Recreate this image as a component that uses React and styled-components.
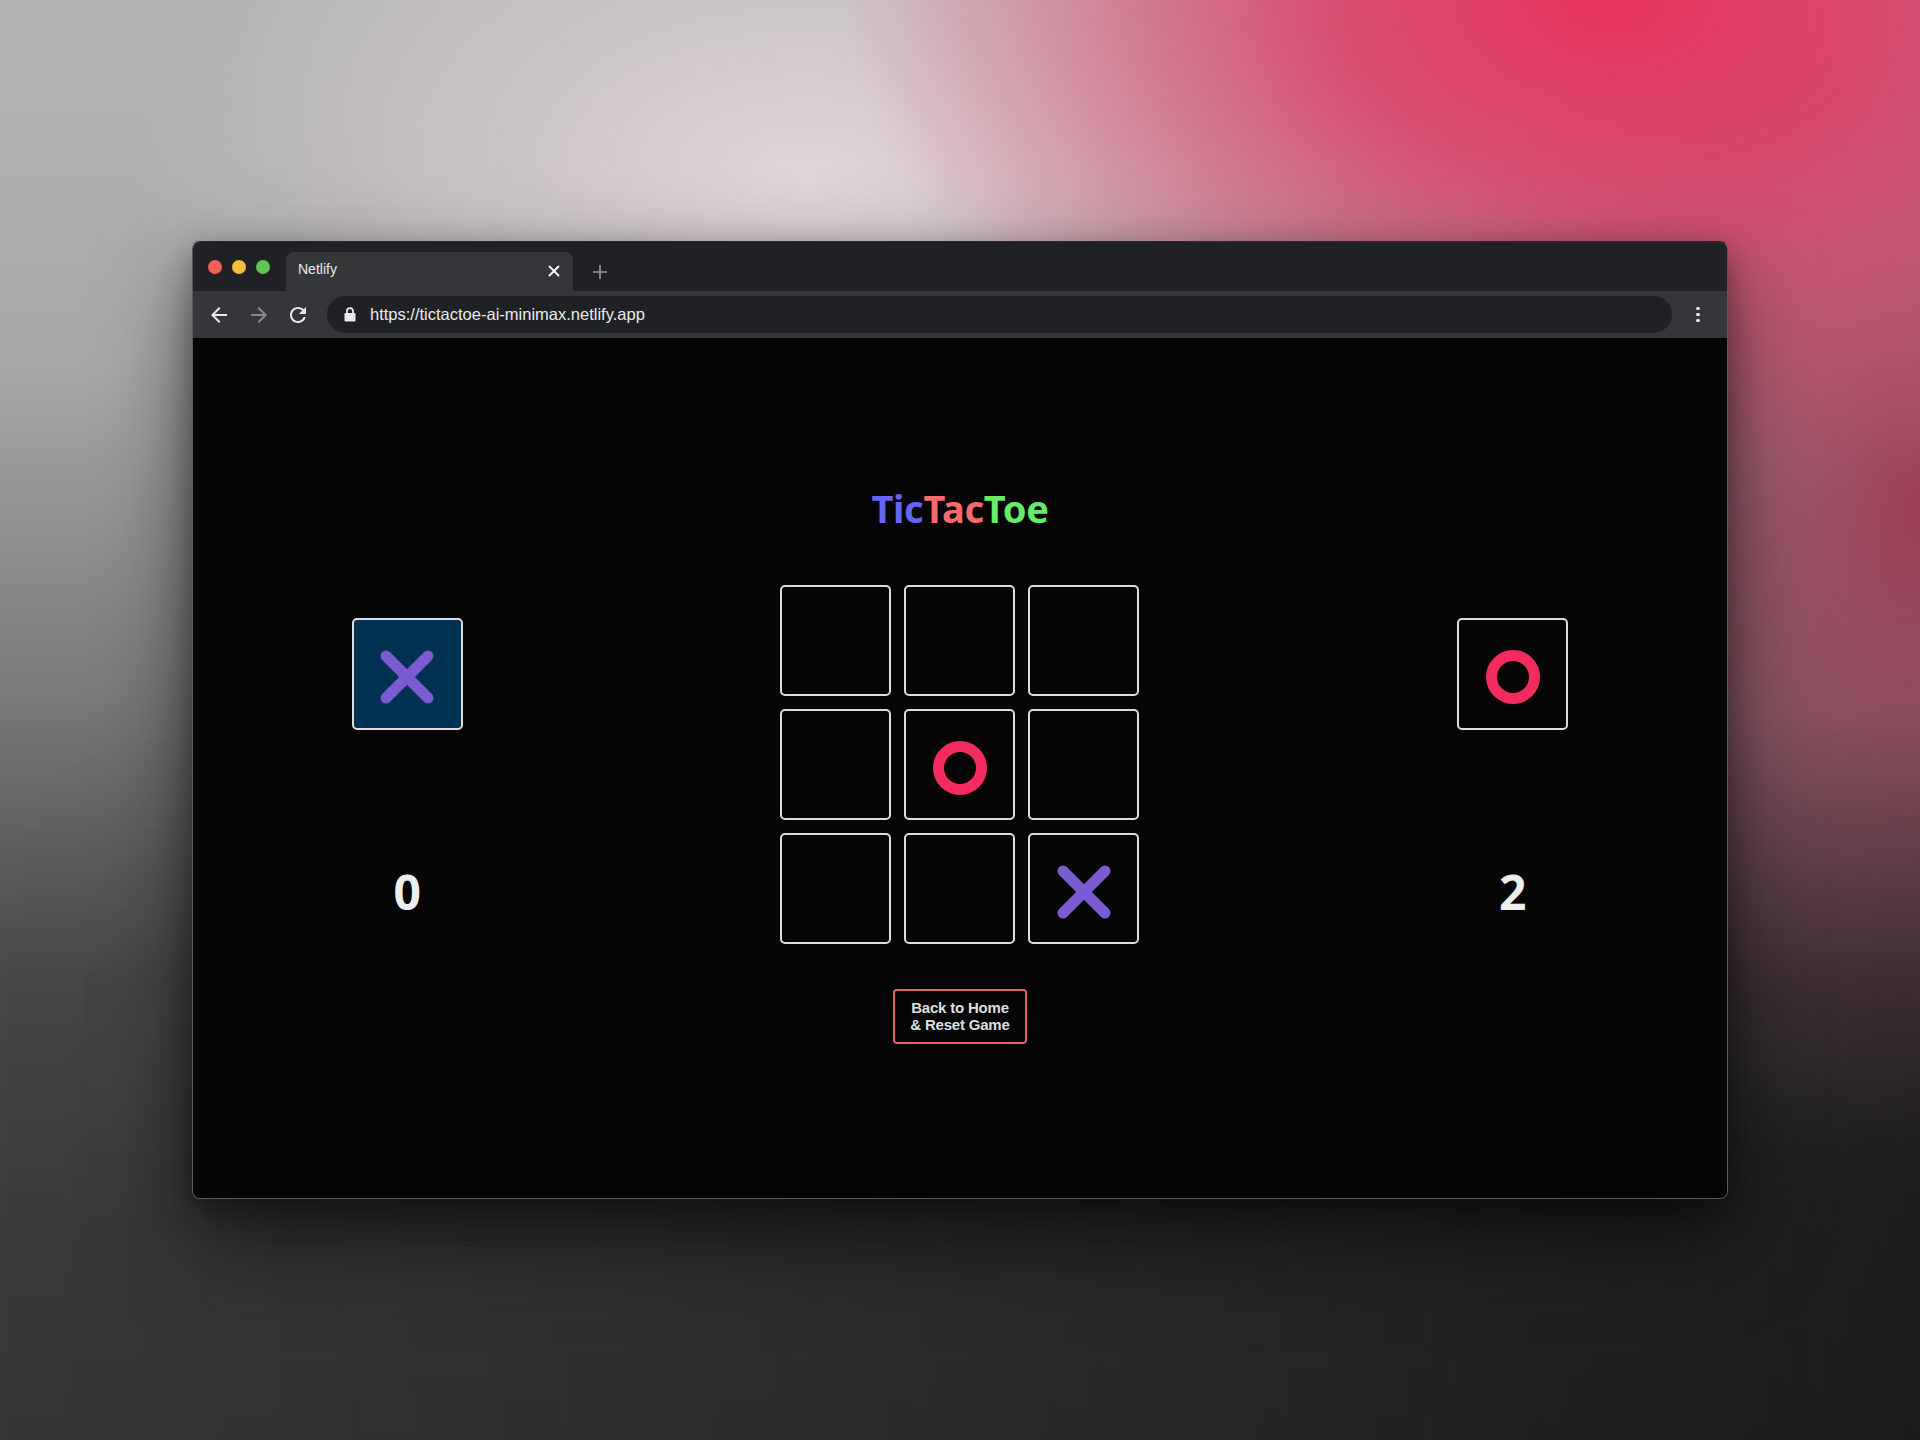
import React from "react";
import styled, { createGlobalStyle } from "styled-components";

const Global = createGlobalStyle`
  html, body { margin: 0; padding: 0; }
  body { font-family: "Liberation Sans", Arial, sans-serif; }
  * { box-sizing: border-box; }
`;

const Page = styled.div`
  position: relative;
  width: 1920px;
  height: 1440px;
  padding: 241px 192px 0 192px;
  background:
    radial-gradient(ellipse 40% 34% at 84% 0%, rgba(232, 52, 94, 1) 0%, rgba(222, 58, 98, 0.85) 35%, rgba(200, 55, 90, 0) 100%),
    radial-gradient(ellipse 26% 45% at 100% 35%, rgba(160, 42, 72, 0.8) 0%, rgba(120, 35, 60, 0) 100%),
    radial-gradient(ellipse 35% 25% at 42% 12%, rgba(226, 214, 217, 1) 0%, rgba(220, 208, 211, 0) 100%),
    linear-gradient(180deg, #b4b4b4 0%, #a8a8a8 25%, #7a7a7a 48%, #474747 68%, #3a3a3a 85%, #363636 100%);
  overflow: hidden;
`;

const BottomShade = styled.div`
  position: absolute;
  inset: 0;
  pointer-events: none;
  background: linear-gradient(90deg, rgba(0, 0, 0, 0) 0%, rgba(0, 0, 0, 0.2) 40%, rgba(10, 10, 10, 0.6) 100%);
  mask-image: linear-gradient(180deg, transparent 50%, black 80%);
`;

const Frame = styled.div`
  position: relative;
  width: 1536px;
  height: 958px;
  display: flex;
  flex-direction: column;
  border-radius: 8px;
  overflow: hidden;
  border: 1px solid #5a5a5a;
  border-top-color: #2a2a2c;
  box-shadow: 0 40px 90px rgba(0, 0, 0, 0.55), 0 10px 30px rgba(0, 0, 0, 0.35);
`;

const TabBar = styled.div`
  height: 49px;
  flex: none;
  background: #202124;
  display: flex;
  align-items: flex-end;
  padding-left: 15px;
`;

const Lights = styled.div`
  display: flex;
  gap: 10px;
  align-self: flex-start;
  margin-top: 18px;
  margin-right: 16px;
`;

const Light = styled.span`
  width: 14px;
  height: 14px;
  border-radius: 50%;
  background: ${(p) => p.$c};
`;

const Tab = styled.div`
  width: 287px;
  height: 39px;
  background: #35363a;
  border-radius: 8px 8px 0 0;
  display: flex;
  align-items: center;
  padding: 0 13px 2px 12px;
  color: #e8eaed;
  font-size: 14px;
`;

const TabTitle = styled.span`
  flex: 1;
  margin-top: -4px;
`;

const NewTab = styled.div`
  width: 54px;
  height: 39px;
  display: flex;
  align-items: center;
  justify-content: center;
  padding-top: 1px;
`;

const Toolbar = styled.div`
  height: 47px;
  flex: none;
  background: #35363a;
  display: flex;
  align-items: center;
  padding: 0 0 0 14px;
`;

const NavBtn = styled.div`
  width: 24px;
  height: 24px;
  margin-right: ${(p) => p.$mr}px;
  display: flex;
`;

const Omnibox = styled.div`
  width: 1345px;
  height: 37px;
  border-radius: 19px;
  background: #202124;
  display: flex;
  align-items: center;
  padding-left: 17px;
  gap: 14px;
  color: #e8eaed;
  font-size: 16.5px;
`;

const Kebab = styled.div`
  margin-left: 24px;
  display: flex;
  flex-direction: column;
  gap: 2.5px;
`;

const Dot = styled.span`
  width: 3.5px;
  height: 3.5px;
  border-radius: 50%;
  background: #e8eaed;
`;

const Content = styled.div`
  flex: 1;
  background: #050505;
  display: flex;
  flex-direction: column;
  align-items: center;
  padding-top: 151px;
`;

const Title = styled.h1`
  margin: 0;
  font-family: "Noto Sans", "Open Sans", sans-serif;
  font-weight: 700;
  font-size: 38px;
  line-height: 1;
  letter-spacing: -0.3px;
`;

const Part = styled.span`
  color: ${(p) => p.$c};
`;

const Arena = styled.div`
  margin-top: 58px;
  width: 100%;
  display: flex;
  justify-content: space-around;
  align-items: flex-start;
`;

const Player = styled.div`
  width: 111px;
  padding-top: 33px;
  display: flex;
  flex-direction: column;
  align-items: center;
`;

const PlayerBox = styled.div`
  width: 111px;
  height: 112px;
  border: 2px solid #dcdcdc;
  border-radius: 5px;
  background: ${(p) => (p.$active ? "#003152" : "#050505")};
  display: flex;
  align-items: center;
  justify-content: center;
  padding-top: 6px;
`;

const Score = styled.div`
  margin-top: 138px;
  font-family: "Noto Sans", "Open Sans", sans-serif;
  font-weight: 700;
  font-size: 48px;
  line-height: 1;
  color: #eeeeee;
`;

const Middle = styled.div`
  display: flex;
  flex-direction: column;
  align-items: center;
`;

const Board = styled.div`
  display: grid;
  grid-template-columns: repeat(3, 111px);
  grid-auto-rows: 111px;
  gap: 13px;
`;

const Cell = styled.div`
  border: 2px solid #dcdcdc;
  border-radius: 5px;
  background: #050505;
  display: flex;
  align-items: center;
  justify-content: center;
  padding-top: 6px;
`;

const ResetButton = styled.button`
  margin-top: 45px;
  background: #050505;
  border: 2px solid #e06262;
  border-radius: 4px;
  padding: 8px 15px 9px;
  color: #dedede;
  font-family: "Liberation Sans", Arial, sans-serif;
  font-weight: 700;
  font-size: 15px;
  line-height: 17px;
  letter-spacing: -0.2px;
  text-align: center;
`;

const XMark = () => (
  <svg width="60" height="60" viewBox="0 0 60 60">
    <g stroke="#7a5bd0" strokeWidth="11" strokeLinecap="round">
      <line x1="9" y1="9" x2="51" y2="51" />
      <line x1="51" y1="9" x2="9" y2="51" />
    </g>
  </svg>
);

const OMark = () => (
  <svg width="60" height="60" viewBox="0 0 60 60">
    <circle cx="30" cy="30" r="21.5" fill="none" stroke="#f42c5e" strokeWidth="11" />
  </svg>
);

const board = [null, null, null, null, "O", null, null, null, "X"];

export default function App() {
  return (
    <>
      <Global />
      <Page>
        <BottomShade />
        <Frame>
          <TabBar>
            <Lights>
              <Light $c="#ee5f57" />
              <Light $c="#f6bd3b" />
              <Light $c="#5fc553" />
            </Lights>
            <Tab>
              <TabTitle>Netlify</TabTitle>
              <svg width="12" height="12" viewBox="0 0 12 12">
                <g stroke="#ffffff" strokeWidth="1.8" strokeLinecap="round">
                  <line x1="1.5" y1="1.5" x2="10.5" y2="10.5" />
                  <line x1="10.5" y1="1.5" x2="1.5" y2="10.5" />
                </g>
              </svg>
            </Tab>
            <NewTab>
              <svg width="14" height="14" viewBox="0 0 14 14">
                <g stroke="#8b8c8f" strokeWidth="1.8">
                  <line x1="7" y1="0" x2="7" y2="14" />
                  <line x1="0" y1="7" x2="14" y2="7" />
                </g>
              </svg>
            </NewTab>
          </TabBar>
          <Toolbar>
            <NavBtn $mr={16}>
              <svg width="24" height="24" viewBox="0 0 24 24">
                <path fill="#e8eaed" d="M20 11H7.83l5.59-5.59L12 4l-8 8 8 8 1.41-1.41L7.83 13H20v-2z" />
              </svg>
            </NavBtn>
            <NavBtn $mr={15}>
              <svg width="24" height="24" viewBox="0 0 24 24">
                <path fill="#8a8b8e" d="M12 4l-1.41 1.41L16.17 11H4v2h12.17l-5.58 5.59L12 20l8-8z" />
              </svg>
            </NavBtn>
            <NavBtn $mr={17}>
              <svg width="24" height="24" viewBox="0 0 24 24">
                <path fill="#e8eaed" d="M17.65 6.35C16.2 4.9 14.21 4 12 4c-4.42 0-7.990 3.58-7.99 8s3.57 8 7.99 8c3.73 0 6.84-2.55 7.73-6h-2.08c-.82 2.33-3.04 4-5.65 4-3.310 0-6-2.69-6-6s2.69-6 6-6c1.66 0 3.14.69 4.22 1.78L13 11h7V4l-2.35 2.35z" />
              </svg>
            </NavBtn>
            <Omnibox>
              <svg width="12" height="15" viewBox="0 0 12 15">
                <path d="M3 6.5V4.2a3 3 0 0 1 6 0v2.3" fill="none" stroke="#e8eaed" strokeWidth="1.8" />
                <rect x="0.5" y="6" width="11" height="8.5" rx="1.3" fill="#e8eaed" />
              </svg>
              <span>https://tictactoe-ai-minimax.netlify.app</span>
            </Omnibox>
            <Kebab>
              <Dot />
              <Dot />
              <Dot />
            </Kebab>
          </Toolbar>
          <Content>
            <Title>
              <Part $c="#6464f0">Tic</Part>
              <Part $c="#fa6a6a">Tac</Part>
              <Part $c="#66ec66">Toe</Part>
            </Title>
            <Arena>
              <Player>
                <PlayerBox $active>
                  <XMark />
                </PlayerBox>
                <Score>0</Score>
              </Player>
              <Middle>
                <Board>
                  {board.map((v, i) => (
                    <Cell key={i}>
                      {v === "X" && <XMark />}
                      {v === "O" && <OMark />}
                    </Cell>
                  ))}
                </Board>
                <ResetButton>
                  Back to Home
                  <br />& Reset Game
                </ResetButton>
              </Middle>
              <Player>
                <PlayerBox>
                  <OMark />
                </PlayerBox>
                <Score>2</Score>
              </Player>
            </Arena>
          </Content>
        </Frame>
      </Page>
    </>
  );
}
